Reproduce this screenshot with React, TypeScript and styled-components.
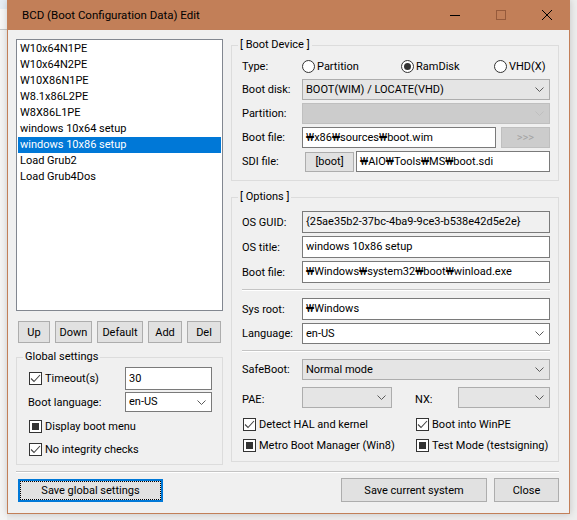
import React from "react";
import styled, { createGlobalStyle } from "styled-components";

const GlobalStyle = createGlobalStyle`
  * { box-sizing: border-box; }
  html, body { margin: 0; padding: 0; }
  body {
    width: 577px;
    height: 520px;
    overflow: hidden;
    background: #ededed;
    font-family: Roboto, "Segoe UI", sans-serif;
    font-size: 11px;
    color: #000;
  }
`;

type CheckState = "checked" | "indeterminate" | "unchecked";

const BOOT_ENTRIES = [
  "W10x64N1PE",
  "W10x64N2PE",
  "W10X86N1PE",
  "W8.1x86L2PE",
  "W8X86L1PE",
  "windows 10x64 setup",
  "windows 10x86 setup",
  "Load Grub2",
  "Load Grub4Dos",
];

export default function App() {
  return (
    <>
      <GlobalStyle />
      <Desktop>
        <BehindStrip>
          <BehindTitle />
        </BehindStrip>
        <Window>
          <TitleBar>
            <Title>BCD (Boot Configuration Data) Edit</Title>
            <CaptionButton>
              <svg width="10" height="10" viewBox="0 0 10 10">
                <line x1="0" y1="5.5" x2="10" y2="5.5" stroke="#000" strokeWidth="1" />
              </svg>
            </CaptionButton>
            <CaptionButton $dim>
              <svg width="10" height="10" viewBox="0 0 10 10">
                <rect x="0.5" y="0.5" width="9" height="9" fill="none" stroke="#8c5235" strokeWidth="1" />
              </svg>
            </CaptionButton>
            <CaptionButton>
              <svg width="10" height="10" viewBox="0 0 10 10">
                <path d="M0 0 L10 10 M10 0 L0 10" stroke="#000" strokeWidth="1" />
              </svg>
            </CaptionButton>
          </TitleBar>

          <Client>
            <Main>
              <LeftColumn>
                <ListBox>
                  {BOOT_ENTRIES.map((name, i) => (
                    <ListItem key={name} $selected={i === 6}>
                      {name}
                    </ListItem>
                  ))}
                </ListBox>

                <ListButtons>
                  <Button $w={32}>Up</Button>
                  <Button $w={37}>Down</Button>
                  <Button $w={46}>Default</Button>
                  <Button $w={34}>Add</Button>
                  <Button $w={34}>Del</Button>
                </ListButtons>

                <GroupBox $top={6}>
                  <Legend>Global settings</Legend>
                  <GlobalGrid>
                    <CheckRow $h={23}>
                      <Check state="checked" />
                      <span>Timeout(s)</span>
                    </CheckRow>
                    <TextBox $h={23}>30</TextBox>
                    <FieldLabel>Boot language:</FieldLabel>
                    <Combo $h={20} $editable>
                      <span>en-US</span>
                      <Chevron />
                    </Combo>
                    <CheckRow $h={21} $span $top={2}>
                      <Check state="indeterminate" />
                      <span>Display boot menu</span>
                    </CheckRow>
                    <CheckRow $h={21} $span>
                      <Check state="checked" />
                      <span>No integrity checks</span>
                    </CheckRow>
                  </GlobalGrid>
                </GroupBox>
              </LeftColumn>

              <RightColumn>
                <GroupBox>
                  <Legend>[ Boot Device ]</Legend>
                  <DeviceBody>
                    <FormRow $h={19}>
                      <FieldLabel>Type:</FieldLabel>
                      <RadioGroup>
                        <RadioOption>
                          <Radio $on={false} />
                          <span>Partition</span>
                        </RadioOption>
                        <RadioOption>
                          <Radio $on />
                          <span>RamDisk</span>
                        </RadioOption>
                        <RadioOption>
                          <Radio $on={false} />
                          <span>VHD(X)</span>
                        </RadioOption>
                      </RadioGroup>
                    </FormRow>
                    <FormRow $h={21}>
                      <FieldLabel>Boot disk:</FieldLabel>
                      <Combo $h={21}>
                        <span>BOOT(WIM) / LOCATE(VHD)</span>
                        <Chevron />
                      </Combo>
                    </FormRow>
                    <FormRow $h={21}>
                      <FieldLabel>Partition:</FieldLabel>
                      <Combo $h={21} $disabled>
                        <span />
                        <Chevron $disabled />
                      </Combo>
                    </FormRow>
                    <FormRow $h={21}>
                      <FieldLabel>Boot file:</FieldLabel>
                      <PathPair>
                        <TextBox $h={21}>₩x86₩sources₩boot.wim</TextBox>
                        <Button $w={49} $h={21} $disabled>
                          &gt;&gt;&gt;
                        </Button>
                      </PathPair>
                    </FormRow>
                    <FormRow $h={21}>
                      <FieldLabel>SDI file:</FieldLabel>
                      <SdiPair>
                        <Button $w={49} $h={20}>
                          [boot]
                        </Button>
                        <TextBox $h={21}>₩AIO₩Tools₩MS₩boot.sdi</TextBox>
                      </SdiPair>
                    </FormRow>
                  </DeviceBody>
                </GroupBox>

                <GroupBox $top={8}>
                  <Legend>[ Options ]</Legend>
                  <OptionsBody>
                    <FormRow $h={22}>
                      <FieldLabel>OS GUID:</FieldLabel>
                      <TextBox $h={22} $readOnly>
                        {"{25ae35b2-37bc-4ba9-9ce3-b538e42d5e2e}"}
                      </TextBox>
                    </FormRow>
                    <FormRow $h={22}>
                      <FieldLabel>OS title:</FieldLabel>
                      <TextBox $h={22}>windows 10x86 setup</TextBox>
                    </FormRow>
                    <FormRow $h={22}>
                      <FieldLabel>Boot file:</FieldLabel>
                      <TextBox $h={22}>₩Windows₩system32₩boot₩winload.exe</TextBox>
                    </FormRow>
                    <Separator />
                    <FormRow $h={22}>
                      <FieldLabel>Sys root:</FieldLabel>
                      <TextBox $h={22}>₩Windows</TextBox>
                    </FormRow>
                    <FormRow $h={21}>
                      <FieldLabel>Language:</FieldLabel>
                      <Combo $h={21} $editable>
                        <span>en-US</span>
                        <Chevron />
                      </Combo>
                    </FormRow>
                    <Separator />
                    <FormRow $h={21}>
                      <FieldLabel>SafeBoot:</FieldLabel>
                      <Combo $h={21}>
                        <span>Normal mode</span>
                        <Chevron />
                      </Combo>
                    </FormRow>
                    <PaeRow>
                      <FieldLabel $low>PAE:</FieldLabel>
                      <Combo $h={21}>
                        <span />
                        <Chevron />
                      </Combo>
                      <span />
                      <FieldLabel $low>NX:</FieldLabel>
                      <Combo $h={21}>
                        <span />
                        <Chevron />
                      </Combo>
                    </PaeRow>
                    <CheckGrid>
                      <CheckRow $h={21}>
                        <Check state="checked" />
                        <span>Detect HAL and kernel</span>
                      </CheckRow>
                      <CheckRow $h={21}>
                        <Check state="checked" />
                        <span>Boot into WinPE</span>
                      </CheckRow>
                      <CheckRow $h={21}>
                        <Check state="indeterminate" />
                        <span>Metro Boot Manager (Win8)</span>
                      </CheckRow>
                      <CheckRow $h={21}>
                        <Check state="indeterminate" />
                        <span>Test Mode (testsigning)</span>
                      </CheckRow>
                    </CheckGrid>
                  </OptionsBody>
                </GroupBox>
              </RightColumn>
            </Main>

            <BottomLine />

            <BottomBar>
              <DefaultButton>
                <FocusRect>Save global settings</FocusRect>
              </DefaultButton>
              <Spacer />
              <Button $w={146} $h={24}>
                Save current system
              </Button>
              <Button $w={65} $h={24}>
                Close
              </Button>
            </BottomBar>
          </Client>
        </Window>
      </Desktop>
    </>
  );
}

function Check({ state }: { state: CheckState }) {
  return (
    <CheckBox>
      {state === "checked" && (
        <svg width="11" height="11" viewBox="0 0 11 11">
          <polyline points="1,5.5 4,8.5 10,2" fill="none" stroke="#444" strokeWidth="1.1" />
        </svg>
      )}
      {state === "indeterminate" && <CheckFill />}
    </CheckBox>
  );
}

function Chevron({ $disabled }: { $disabled?: boolean }) {
  return (
    <ChevronWrap>
      <svg width="9" height="5" viewBox="0 0 9 5">
        <polyline
          points="0.5,0.5 4.5,4.5 8.5,0.5"
          fill="none"
          stroke={$disabled ? "#bfbfbf" : "#5a5a5a"}
          strokeWidth="1"
        />
      </svg>
    </ChevronWrap>
  );
}

const Desktop = styled.div`
  display: flex;
  align-items: flex-start;
  width: 577px;
  height: 520px;
`;

const BehindStrip = styled.div`
  width: 7px;
  height: 520px;
  background: #f4f4f4;
  overflow: hidden;
  flex-shrink: 0;
`;

const BehindTitle = styled.div`
  height: 30px;
  border-bottom: 1px solid #c8c8c8;
  background: linear-gradient(#e6edf4 0, #e6edf4 9px, #f7f7f7 9px);
`;

const Window = styled.div`
  width: 563px;
  height: 514px;
  display: flex;
  flex-direction: column;
  border: 1px solid #c27f58;
  border-top: none;
  box-shadow: 0 0 7px rgba(0, 0, 0, 0.18);
  flex-shrink: 0;
`;

const TitleBar = styled.div`
  height: 30px;
  display: flex;
  align-items: center;
  background: #c27f58;
  margin: 0 -1px;
  padding-left: 15px;
`;

const Title = styled.div`
  flex: 1;
  font-size: 11.5px;
  color: #000;
  padding-bottom: 1px;
`;

const CaptionButton = styled.div<{ $dim?: boolean }>`
  width: 46px;
  height: 30px;
  display: flex;
  align-items: center;
  justify-content: center;
  opacity: ${(p) => (p.$dim ? 0.8 : 1)};
`;

const Client = styled.div`
  flex: 1;
  background: #f0f0f0;
  padding: 7px 10px 0 8px;
  display: flex;
  flex-direction: column;
`;

const Main = styled.div`
  display: flex;
  align-items: flex-start;
  gap: 8px;
`;

const LeftColumn = styled.div`
  width: 207px;
  margin-top: 2px;
  display: flex;
  flex-direction: column;
`;

const RightColumn = styled.div`
  width: 328px;
  display: flex;
  flex-direction: column;
`;

const ListBox = styled.div`
  height: 272px;
  background: #fff;
  border: 1px solid #828790;
  padding: 1px;
`;

const ListItem = styled.div<{ $selected?: boolean }>`
  height: 16px;
  line-height: 16px;
  padding-left: 2px;
  white-space: nowrap;
  background: ${(p) => (p.$selected ? "#0078d7" : "transparent")};
  color: ${(p) => (p.$selected ? "#fff" : "#000")};
`;

const ListButtons = styled.div`
  display: flex;
  gap: 5px;
  margin-top: 10px;
  padding-left: 2px;
`;

const Button = styled.div<{ $w: number; $h?: number; $disabled?: boolean }>`
  width: ${(p) => p.$w}px;
  height: ${(p) => p.$h ?? 22}px;
  flex-shrink: 0;
  display: flex;
  align-items: center;
  justify-content: center;
  background: ${(p) => (p.$disabled ? "#cccccc" : "#e1e1e1")};
  border: 1px solid ${(p) => (p.$disabled ? "#bfbfbf" : "#adadad")};
  color: ${(p) => (p.$disabled ? "#a3a3a3" : "#000")};
  white-space: nowrap;
`;

const GroupBox = styled.fieldset<{ $top?: number }>`
  margin: ${(p) => p.$top ?? 0}px 0 0 0;
  padding: 0;
  min-width: 0;
  border: 1px solid #dcdcdc;
`;

const Legend = styled.legend`
  margin-left: 6px;
  padding: 0 2px;
  line-height: 16px;
`;

const GlobalGrid = styled.div`
  display: grid;
  grid-template-columns: 97px 87px;
  row-gap: 2px;
  align-items: center;
  padding: 2px 9px 4px 11px;
`;

const FieldLabel = styled.span<{ $low?: boolean }>`
  white-space: nowrap;
  padding-top: ${(p) => (p.$low ? 3 : 0)}px;
`;

const CheckRow = styled.div<{ $h: number; $span?: boolean; $top?: number }>`
  height: ${(p) => p.$h}px;
  display: flex;
  align-items: center;
  gap: 3px;
  white-space: nowrap;
  grid-column: ${(p) => (p.$span ? "1 / -1" : "auto")};
  margin-top: ${(p) => p.$top ?? 0}px;
`;

const CheckBox = styled.span`
  width: 13px;
  height: 13px;
  flex-shrink: 0;
  border: 1px solid #333;
  background: #fff;
  display: flex;
  align-items: center;
  justify-content: center;
  margin-left: 1px;
`;

const CheckFill = styled.span`
  width: 7px;
  height: 7px;
  background: #333;
`;

const TextBox = styled.div<{ $h: number; $readOnly?: boolean }>`
  height: ${(p) => p.$h}px;
  min-width: 0;
  display: flex;
  align-items: center;
  padding: 0 3px 1px;
  border: 1px solid #7a7a7a;
  background: ${(p) => (p.$readOnly ? "#f0f0f0" : "#fff")};
  white-space: nowrap;
  overflow: hidden;
`;

const Combo = styled.div<{ $h: number; $editable?: boolean; $disabled?: boolean }>`
  height: ${(p) => p.$h}px;
  display: flex;
  align-items: center;
  justify-content: space-between;
  padding: 0 5px 1px 3px;
  white-space: nowrap;
  border: 1px solid
    ${(p) => (p.$editable ? "#7a7a7a" : p.$disabled ? "#bfbfbf" : "#adadad")};
  background: ${(p) => (p.$editable ? "#fff" : p.$disabled ? "#cccccc" : "#e5e5e5")};
`;

const ChevronWrap = styled.span`
  display: flex;
  align-items: center;
  padding-top: 1px;
`;

const DeviceBody = styled.div`
  display: flex;
  flex-direction: column;
  gap: 3px;
  padding: 4px 8px 8px 10px;
`;

const OptionsBody = styled.div`
  display: flex;
  flex-direction: column;
  gap: 3px;
  padding: 6px 8px 5px 10px;
`;

const FormRow = styled.div<{ $h: number }>`
  height: ${(p) => p.$h}px;
  display: grid;
  grid-template-columns: 60px 1fr;
  align-items: center;
`;

const RadioGroup = styled.div`
  display: grid;
  grid-template-columns: 99px 93px 1fr;
  align-items: center;
`;

const RadioOption = styled.div`
  display: flex;
  align-items: center;
  gap: 2px;
  white-space: nowrap;
`;

const Radio = styled.span<{ $on: boolean }>`
  width: 13px;
  height: 13px;
  border-radius: 50%;
  border: 1px solid #333;
  background: #fff;
  display: flex;
  align-items: center;
  justify-content: center;

  &::after {
    content: "";
    width: 7px;
    height: 7px;
    border-radius: 50%;
    background: ${(p) => (p.$on ? "#333" : "transparent")};
  }
`;

const PathPair = styled.div`
  display: grid;
  grid-template-columns: 1fr 49px;
  column-gap: 5px;
  align-items: center;
`;

const SdiPair = styled.div`
  display: grid;
  grid-template-columns: 49px 1fr;
  column-gap: 2px;
  align-items: center;
  padding-left: 3px;
`;

const Separator = styled.div`
  height: 2px;
  margin: 3px 0 4px;
  border-top: 1px solid #c4c4c4;
  border-bottom: 1px solid #fff;
`;

const PaeRow = styled.div`
  height: 21px;
  margin-top: 4px;
  display: grid;
  grid-template-columns: 60px 90px 23px 43px 92px;
  align-items: center;
`;

const CheckGrid = styled.div`
  display: grid;
  grid-template-columns: 173px 1fr;
  margin-top: 3px;
`;

const BottomLine = styled.div`
  height: 2px;
  margin-top: 6px;
  border-top: 1px solid #c4c4c4;
  border-bottom: 1px solid #fff;
`;

const BottomBar = styled.div`
  display: flex;
  align-items: center;
  gap: 7px;
  margin-top: 5px;
  padding-left: 2px;
`;

const Spacer = styled.div`
  flex: 1;
`;

const DefaultButton = styled.div`
  width: 145px;
  height: 23px;
  border: 2px solid #0078d7;
  background: #e1e1e1;
  padding: 1px;
  margin-top: 1px;
`;

const FocusRect = styled.div`
  height: 100%;
  display: flex;
  align-items: center;
  justify-content: center;
  outline: 1px dotted #000;
  white-space: nowrap;
`;
